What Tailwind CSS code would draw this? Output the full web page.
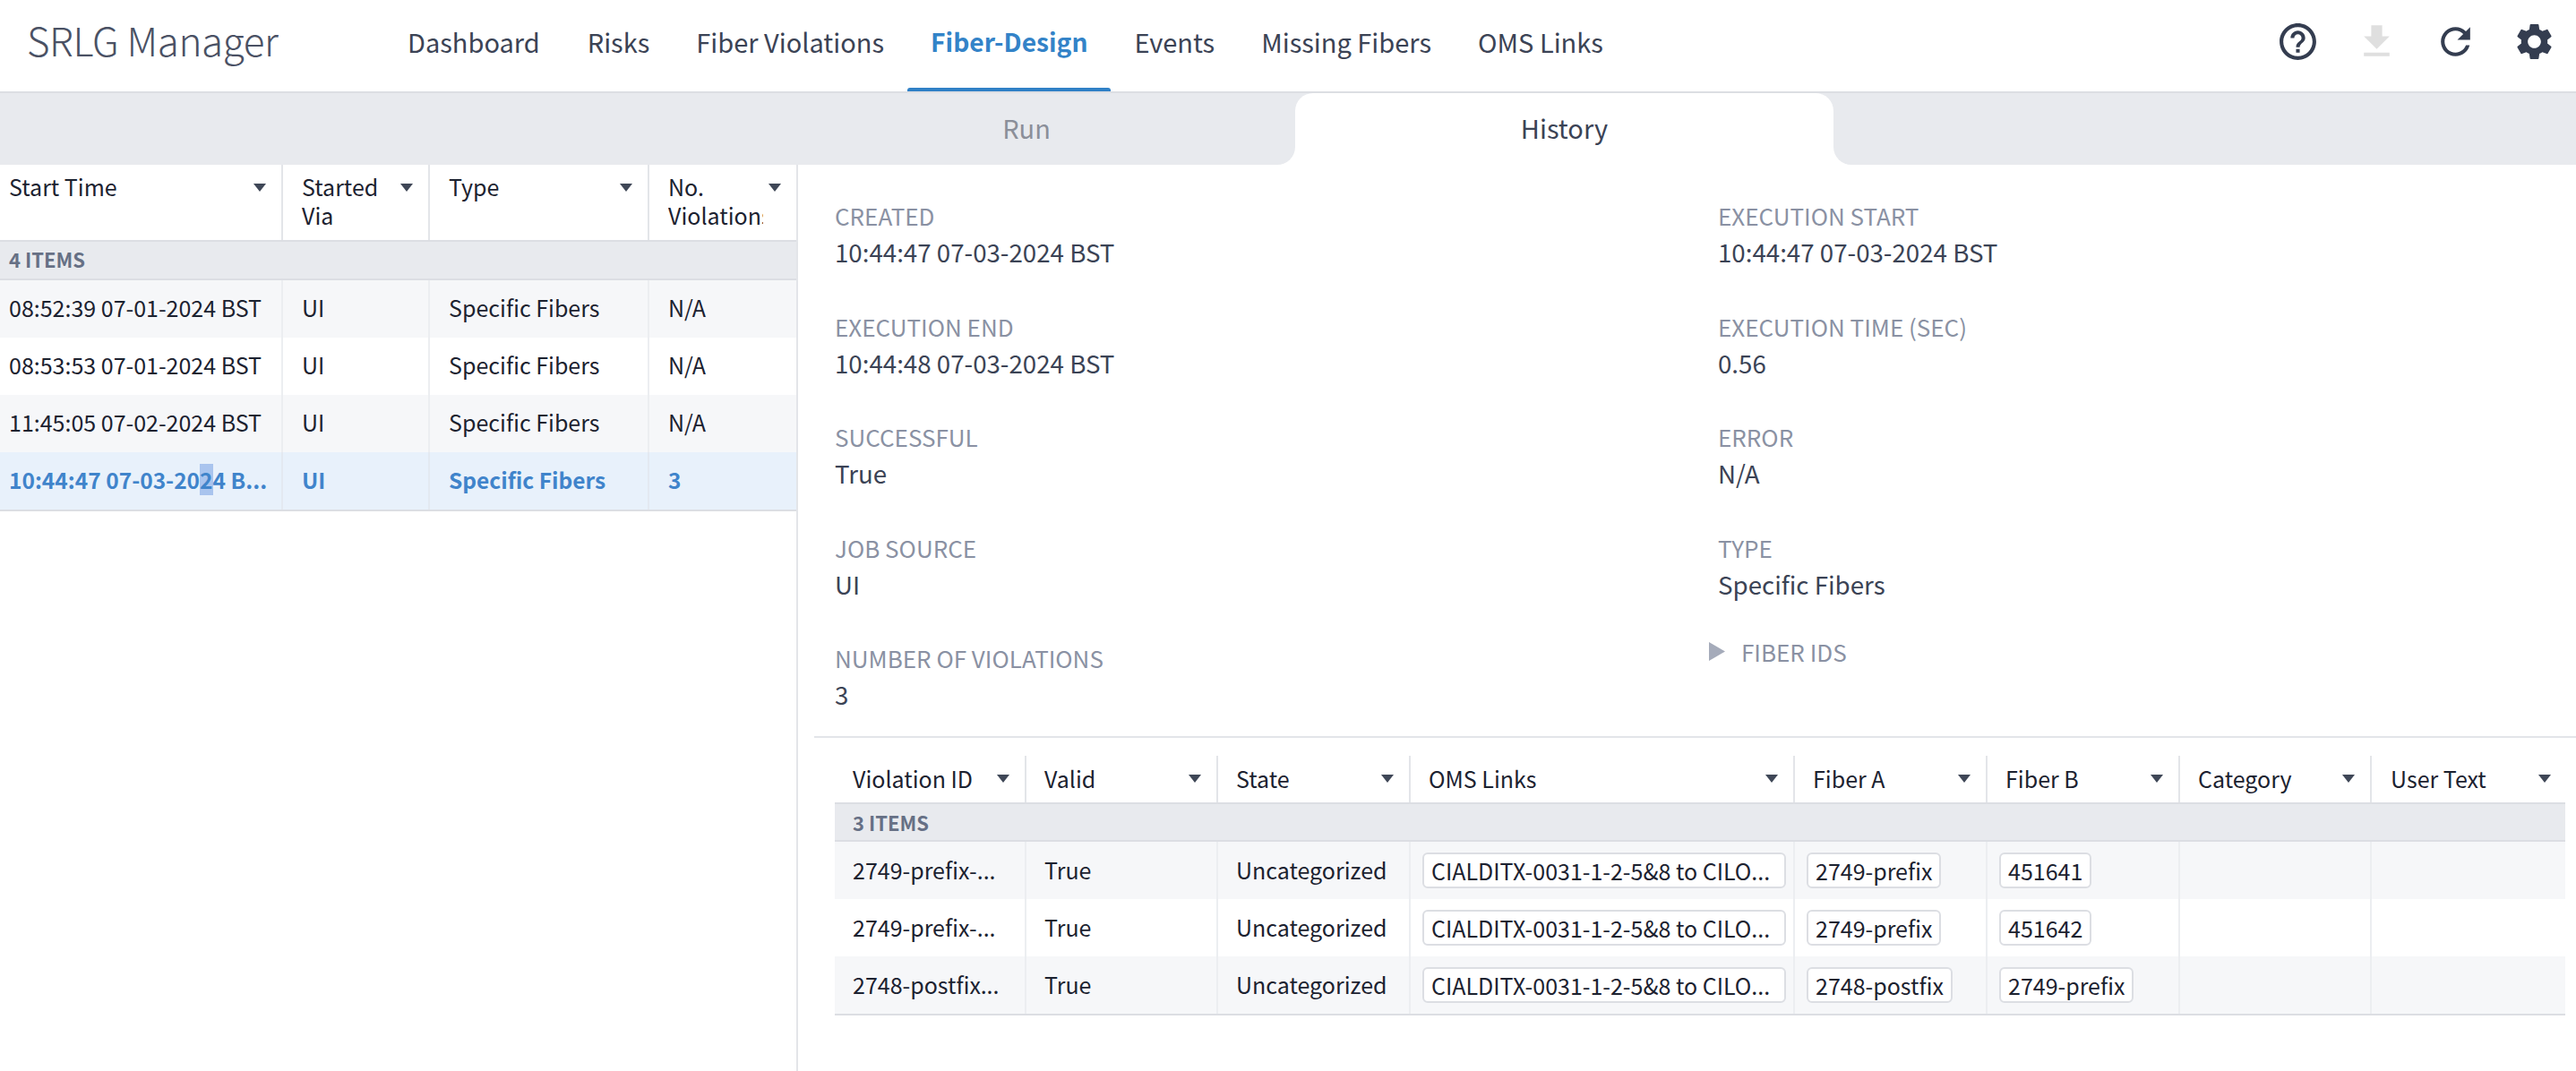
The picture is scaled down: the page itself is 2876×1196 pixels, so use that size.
<!DOCTYPE html>
<html lang="en">
<head>
    <meta charset="UTF-8">
    <title>SRLG Manager</title>
    <script src="https://cdn.jsdelivr.net/npm/@tailwindcss/browser@4"></script>
</head>
<body class="bg-white h-[1196px] overflow-hidden font-['Noto_Sans_CJK_JP',sans-serif] text-[25px] leading-[32px] text-[#1c2230]">

    <!-- top bar -->
    <header class="h-[104px] flex items-center border-b-2 border-[#dcdee3] text-[#3b4355]">
        <div class="w-[440px] pl-[30px] pb-[15px] text-[44px] tracking-[-0.4px] font-light text-[#4a5164]">SRLG Manager</div>
        <nav class="flex h-[102px] text-[29px]">
            <a class="h-full flex items-center pl-[15px] pr-[27px] pb-[10px]">Dashboard</a>
            <a class="h-full flex items-center px-[26px] pb-[10px]">Risks</a>
            <a class="h-full flex items-center px-[26px] pb-[10px]">Fiber Violations</a>
            <a class="relative h-full flex items-center px-[26px] pb-[10px] text-[28.2px] font-semibold text-[#3383c8]">Fiber-Design<span class="absolute inset-x-0 bottom-0 h-[4px] rounded-t-[3px] bg-[#2f80c6]"></span></a>
            <a class="h-full flex items-center px-[26px] pb-[10px]">Events</a>
            <a class="h-full flex items-center px-[26px] pb-[10px]">Missing Fibers</a>
            <a class="h-full flex items-center px-[26px] pb-[10px]">OMS Links</a>
        </nav>
        <div class="ml-auto flex gap-[39px] pr-[22px] pb-[9px] fill-[#343d50]">
            <svg class="w-[49px] h-[49px]" viewBox="0 0 24 24"><path d="M11 18h2v-2h-2v2zm1-16C6.48 2 2 6.48 2 12s4.48 10 10 10 10-4.48 10-10S17.52 2 12 2zm0 18c-4.41 0-8-3.59-8-8s3.59-8 8-8 8 3.59 8 8-3.59 8-8 8zm0-14c-2.21 0-4 1.79-4 4h2c0-1.1.9-2 2-2s2 .9 2 2c0 2-3 1.75-3 5h2c0-2.25 3-2.5 3-5 0-2.21-1.79-4-4-4z"/></svg>
            <svg class="w-[49px] h-[49px] fill-[#dfdfdf]" viewBox="0 0 24 24"><path d="M19 9h-4V3H9v6H5l7 7 7-7zM5 18v2h14v-2H5z"/></svg>
            <svg class="w-[49px] h-[49px]" viewBox="0 0 24 24"><path d="M17.65 6.35C16.2 4.9 14.21 4 12 4c-4.42 0-7.99 3.58-7.99 8s3.57 8 7.99 8c3.73 0 6.84-2.55 7.73-6h-2.08c-.82 2.33-3.04 4-5.65 4-3.31 0-6-2.69-6-6s2.69-6 6-6c1.66 0 3.14.69 4.22 1.78L13 11h7V4l-2.35 2.35z"/></svg>
            <svg class="w-[49px] h-[49px]" viewBox="0 0 24 24"><path d="M19.14 12.94c.04-.3.06-.61.06-.94 0-.32-.02-.64-.07-.94l2.03-1.58c.18-.14.23-.41.12-.61l-1.92-3.32c-.12-.22-.37-.29-.59-.22l-2.39.96c-.5-.38-1.03-.7-1.62-.94l-.36-2.54c-.04-.24-.24-.41-.48-.41h-3.84c-.24 0-.43.17-.47.41l-.36 2.54c-.59.24-1.13.57-1.62.94l-2.39-.96c-.22-.08-.47 0-.59.22L2.74 8.87c-.12.21-.08.47.12.61l2.03 1.58c-.05.3-.09.63-.09.94s.02.64.07.94l-2.03 1.58c-.18.14-.23.41-.12.61l1.92 3.32c.12.22.37.29.59.22l2.39-.96c.5.38 1.03.7 1.62.94l.36 2.54c.05.24.24.41.48.41h3.84c.24 0 .44-.17.47-.41l.36-2.54c.59-.24 1.13-.56 1.62-.94l2.39.96c.22.08.47 0 .59-.22l1.92-3.32c.12-.22.07-.47-.12-.61l-2.01-1.58zM12 15.6c-1.98 0-3.6-1.62-3.6-3.6s1.62-3.6 3.6-3.6 3.6 1.62 3.6 3.6-1.62 3.6-3.6 3.6z"/></svg>
        </div>
    </header>

    <!-- Run / History tabs -->
    <div class="flex h-[80px] text-[29px]">
        <div class="w-[1446px] pl-[846px] bg-[#e8eaee] rounded-br-[20px]">
            <div class="w-[600px] h-full flex items-center justify-center pb-[4px] text-[#8b8f99]">Run</div>
        </div>
        <div class="w-[601px] bg-[#e8eaee]">
            <div class="h-full flex items-center justify-center pb-[4px] text-[#3b4355] rounded-t-[20px] bg-white">History</div>
        </div>
        <div class="flex-1 bg-[#e8eaee] rounded-bl-[20px]"></div>
    </div>

    <div class="flex h-[1012px]">
        <!-- job list -->
        <section class="w-[891px] border-r-2 border-[#e3e5e9]">
            <div class="grid grid-cols-[316px_164px_245px_164px] h-[86px] border-b-2 border-[#dcdee3]">
                <div class="flex justify-between pl-[10px] pr-[17px] pt-[8px] border-r-2 border-[#e3e5e9]">
                    <span>Start Time</span>
                    <svg class="w-[14px] h-[9px] mt-[13px] fill-[#3f4757]" viewBox="0 0 14 9"><path d="M0 0h14L7 9z"/></svg>
                </div>
                <div class="flex justify-between pl-[21px] pr-[17px] pt-[8px] border-r-2 border-[#e3e5e9]">
                    <span>Started<br>Via</span>
                    <svg class="w-[14px] h-[9px] mt-[13px] fill-[#3f4757]" viewBox="0 0 14 9"><path d="M0 0h14L7 9z"/></svg>
                </div>
                <div class="flex justify-between pl-[21px] pr-[17px] pt-[8px] border-r-2 border-[#e3e5e9]">
                    <span>Type</span>
                    <svg class="w-[14px] h-[9px] mt-[13px] fill-[#3f4757]" viewBox="0 0 14 9"><path d="M0 0h14L7 9z"/></svg>
                </div>
                <div class="flex justify-between pl-[21px] pr-[17px] pt-[8px]">
                    <span class="w-[106px] overflow-hidden">No.<br>Violations</span>
                    <svg class="w-[14px] h-[9px] mt-[13px] fill-[#3f4757]" viewBox="0 0 14 9"><path d="M0 0h14L7 9z"/></svg>
                </div>
            </div>
            <div class="h-[43px] flex items-center pl-[10px] pb-[3px] bg-[#e8eaee] border-b-2 border-[#dcdee3] text-[22px] font-bold text-[#667085]">4 ITEMS</div>

            <div class="grid grid-cols-[316px_164px_245px_164px] h-[64px] items-stretch bg-[#f6f7f9]">
                <div class="flex items-center pl-[10px] pb-[5px] border-r-2 border-[#eceef1]">08:52:39 07-01-2024 BST</div>
                <div class="flex items-center pl-[21px] pb-[5px] border-r-2 border-[#eceef1]">UI</div>
                <div class="flex items-center pl-[21px] pb-[5px] border-r-2 border-[#eceef1]">Specific Fibers</div>
                <div class="flex items-center pl-[21px] pb-[5px]">N/A</div>
            </div>
            <div class="grid grid-cols-[316px_164px_245px_164px] h-[64px] items-stretch">
                <div class="flex items-center pl-[10px] pb-[5px] border-r-2 border-[#eceef1]">08:53:53 07-01-2024 BST</div>
                <div class="flex items-center pl-[21px] pb-[5px] border-r-2 border-[#eceef1]">UI</div>
                <div class="flex items-center pl-[21px] pb-[5px] border-r-2 border-[#eceef1]">Specific Fibers</div>
                <div class="flex items-center pl-[21px] pb-[5px]">N/A</div>
            </div>
            <div class="grid grid-cols-[316px_164px_245px_164px] h-[64px] items-stretch bg-[#f6f7f9]">
                <div class="flex items-center pl-[10px] pb-[5px] border-r-2 border-[#eceef1]">11:45:05 07-02-2024 BST</div>
                <div class="flex items-center pl-[21px] pb-[5px] border-r-2 border-[#eceef1]">UI</div>
                <div class="flex items-center pl-[21px] pb-[5px] border-r-2 border-[#eceef1]">Specific Fibers</div>
                <div class="flex items-center pl-[21px] pb-[5px]">N/A</div>
            </div>
            <div class="grid grid-cols-[316px_164px_245px_164px] h-[66px] items-stretch bg-[#e8f1fb] border-b-2 border-[#dcdee3] text-[24.5px] font-semibold text-[#4084cb]">
                <div class="flex items-center pl-[10px] pb-[3px] border-r-2 border-[#e3e9f1]"><span>10:44:47 07-03-20<span class="bg-[#a9c4ee]">2</span>4 B...</span></div>
                <div class="flex items-center pl-[21px] pb-[3px] border-r-2 border-[#e3e9f1]">UI</div>
                <div class="flex items-center pl-[21px] pb-[3px] border-r-2 border-[#e3e9f1]">Specific Fibers</div>
                <div class="flex items-center pl-[21px] pb-[3px]">3</div>
            </div>
        </section>

        <!-- job details -->
        <section class="flex-1 min-w-0">
            <div class="grid grid-cols-[986px_1fr] pl-[41px] pt-[41px] h-[638px] text-[27.7px] text-[#3b4355]">
                <div class="h-[123.5px]"><div class="text-[26px] text-[#8a91a3]">CREATED</div><div class="mt-[8px]">10:44:47 07-03-2024 BST</div></div>
                <div class="h-[123.5px]"><div class="text-[26px] text-[#8a91a3]">EXECUTION START</div><div class="mt-[8px]">10:44:47 07-03-2024 BST</div></div>
                <div class="h-[123.5px]"><div class="text-[26px] text-[#8a91a3]">EXECUTION END</div><div class="mt-[8px]">10:44:48 07-03-2024 BST</div></div>
                <div class="h-[123.5px]"><div class="text-[26px] text-[#8a91a3]">EXECUTION TIME (SEC)</div><div class="mt-[8px]">0.56</div></div>
                <div class="h-[123.5px]"><div class="text-[26px] text-[#8a91a3]">SUCCESSFUL</div><div class="mt-[8px]">True</div></div>
                <div class="h-[123.5px]"><div class="text-[26px] text-[#8a91a3]">ERROR</div><div class="mt-[8px]">N/A</div></div>
                <div class="h-[123.5px]"><div class="text-[26px] text-[#8a91a3]">JOB SOURCE</div><div class="mt-[8px]">UI</div></div>
                <div class="h-[123.5px]"><div class="text-[26px] text-[#8a91a3]">TYPE</div><div class="mt-[8px]">Specific Fibers</div></div>
                <div class="h-[123.5px]"><div class="text-[26px] text-[#8a91a3]">NUMBER OF VIOLATIONS</div><div class="mt-[8px]">3</div></div>
                <div class="h-[123.5px] flex items-start -mt-[7px] -ml-[10px] gap-[18px] text-[26px] text-[#8a91a3]">
                    <svg class="w-[18px] h-[21px] mt-[5px] fill-[#a5abba]" viewBox="0 0 18 21"><path d="M0 0l18 10.5L0 21z"/></svg>
                    <span>FIBER IDS</span>
                </div>
            </div>

            <div class="ml-[18px] border-t-2 border-[#e3e5e9] pl-[23px] pr-[12px] pt-[20px]">
                <div class="grid grid-cols-[214px_214px_215px_429px_215px_215px_214px_1fr] h-[54px] border-b-2 border-[#dcdee3]">
                    <div class="flex justify-between pl-[20px] pr-[17px] pb-[2px] items-center border-r-2 border-[#e3e5e9]"><span>Violation ID</span><svg class="w-[14px] h-[9px] fill-[#3f4757]" viewBox="0 0 14 9"><path d="M0 0h14L7 9z"/></svg></div>
                    <div class="flex justify-between pl-[20px] pr-[17px] pb-[2px] items-center border-r-2 border-[#e3e5e9]"><span>Valid</span><svg class="w-[14px] h-[9px] fill-[#3f4757]" viewBox="0 0 14 9"><path d="M0 0h14L7 9z"/></svg></div>
                    <div class="flex justify-between pl-[20px] pr-[17px] pb-[2px] items-center border-r-2 border-[#e3e5e9]"><span>State</span><svg class="w-[14px] h-[9px] fill-[#3f4757]" viewBox="0 0 14 9"><path d="M0 0h14L7 9z"/></svg></div>
                    <div class="flex justify-between pl-[20px] pr-[17px] pb-[2px] items-center border-r-2 border-[#e3e5e9]"><span>OMS Links</span><svg class="w-[14px] h-[9px] fill-[#3f4757]" viewBox="0 0 14 9"><path d="M0 0h14L7 9z"/></svg></div>
                    <div class="flex justify-between pl-[20px] pr-[17px] pb-[2px] items-center border-r-2 border-[#e3e5e9]"><span>Fiber A</span><svg class="w-[14px] h-[9px] fill-[#3f4757]" viewBox="0 0 14 9"><path d="M0 0h14L7 9z"/></svg></div>
                    <div class="flex justify-between pl-[20px] pr-[17px] pb-[2px] items-center border-r-2 border-[#e3e5e9]"><span>Fiber B</span><svg class="w-[14px] h-[9px] fill-[#3f4757]" viewBox="0 0 14 9"><path d="M0 0h14L7 9z"/></svg></div>
                    <div class="flex justify-between pl-[20px] pr-[17px] pb-[2px] items-center border-r-2 border-[#e3e5e9]"><span>Category</span><svg class="w-[14px] h-[9px] fill-[#3f4757]" viewBox="0 0 14 9"><path d="M0 0h14L7 9z"/></svg></div>
                    <div class="flex justify-between pl-[21px] pr-[16px] pb-[2px] items-center"><span>User Text</span><svg class="w-[14px] h-[9px] fill-[#3f4757]" viewBox="0 0 14 9"><path d="M0 0h14L7 9z"/></svg></div>
                </div>
                <div class="h-[42px] flex items-center pl-[20px] bg-[#e8eaee] border-b-2 border-[#dcdee3] text-[22px] font-bold text-[#667085]">3 ITEMS</div>

                <div class="grid grid-cols-[214px_214px_215px_429px_215px_215px_214px_1fr] h-[64px] bg-[#f6f7f9]">
                    <div class="flex items-center pl-[20px] pb-[2px] border-r-2 border-[#eceef1]">2749-prefix-...</div>
                    <div class="flex items-center pl-[20px] pb-[2px] border-r-2 border-[#eceef1]">True</div>
                    <div class="flex items-center pl-[20px] pb-[2px] border-r-2 border-[#eceef1]">Uncategorized</div>
                    <div class="flex items-center pl-[13px] border-r-2 border-[#eceef1]"><span class="h-[40px] w-[406px] flex items-center px-[8px] bg-white border-2 border-[#dcdee3] rounded-[6px]">CIALDITX-0031-1-2-5&amp;8 to CILO...</span></div>
                    <div class="flex items-center pl-[13px] border-r-2 border-[#eceef1]"><span class="h-[40px] flex items-center px-[8px] bg-white border-2 border-[#dcdee3] rounded-[6px]">2749-prefix</span></div>
                    <div class="flex items-center pl-[13px] border-r-2 border-[#eceef1]"><span class="h-[40px] flex items-center px-[8px] bg-white border-2 border-[#dcdee3] rounded-[6px]">451641</span></div>
                    <div class="border-r-2 border-[#eceef1]"></div>
                    <div></div>
                </div>
                <div class="grid grid-cols-[214px_214px_215px_429px_215px_215px_214px_1fr] h-[64px]">
                    <div class="flex items-center pl-[20px] pb-[2px] border-r-2 border-[#eceef1]">2749-prefix-...</div>
                    <div class="flex items-center pl-[20px] pb-[2px] border-r-2 border-[#eceef1]">True</div>
                    <div class="flex items-center pl-[20px] pb-[2px] border-r-2 border-[#eceef1]">Uncategorized</div>
                    <div class="flex items-center pl-[13px] border-r-2 border-[#eceef1]"><span class="h-[40px] w-[406px] flex items-center px-[8px] bg-white border-2 border-[#dcdee3] rounded-[6px]">CIALDITX-0031-1-2-5&amp;8 to CILO...</span></div>
                    <div class="flex items-center pl-[13px] border-r-2 border-[#eceef1]"><span class="h-[40px] flex items-center px-[8px] bg-white border-2 border-[#dcdee3] rounded-[6px]">2749-prefix</span></div>
                    <div class="flex items-center pl-[13px] border-r-2 border-[#eceef1]"><span class="h-[40px] flex items-center px-[8px] bg-white border-2 border-[#dcdee3] rounded-[6px]">451642</span></div>
                    <div class="border-r-2 border-[#eceef1]"></div>
                    <div></div>
                </div>
                <div class="grid grid-cols-[214px_214px_215px_429px_215px_215px_214px_1fr] h-[66px] bg-[#f6f7f9] border-b-2 border-[#dcdee3]">
                    <div class="flex items-center pl-[20px] pb-[2px] border-r-2 border-[#eceef1]">2748-postfix...</div>
                    <div class="flex items-center pl-[20px] pb-[2px] border-r-2 border-[#eceef1]">True</div>
                    <div class="flex items-center pl-[20px] pb-[2px] border-r-2 border-[#eceef1]">Uncategorized</div>
                    <div class="flex items-center pl-[13px] border-r-2 border-[#eceef1]"><span class="h-[40px] w-[406px] flex items-center px-[8px] bg-white border-2 border-[#dcdee3] rounded-[6px]">CIALDITX-0031-1-2-5&amp;8 to CILO...</span></div>
                    <div class="flex items-center pl-[13px] border-r-2 border-[#eceef1]"><span class="h-[40px] flex items-center px-[8px] bg-white border-2 border-[#dcdee3] rounded-[6px]">2748-postfix</span></div>
                    <div class="flex items-center pl-[13px] border-r-2 border-[#eceef1]"><span class="h-[40px] flex items-center px-[8px] bg-white border-2 border-[#dcdee3] rounded-[6px]">2749-prefix</span></div>
                    <div class="border-r-2 border-[#eceef1]"></div>
                    <div></div>
                </div>
            </div>
        </section>
    </div>

</body>
</html>
